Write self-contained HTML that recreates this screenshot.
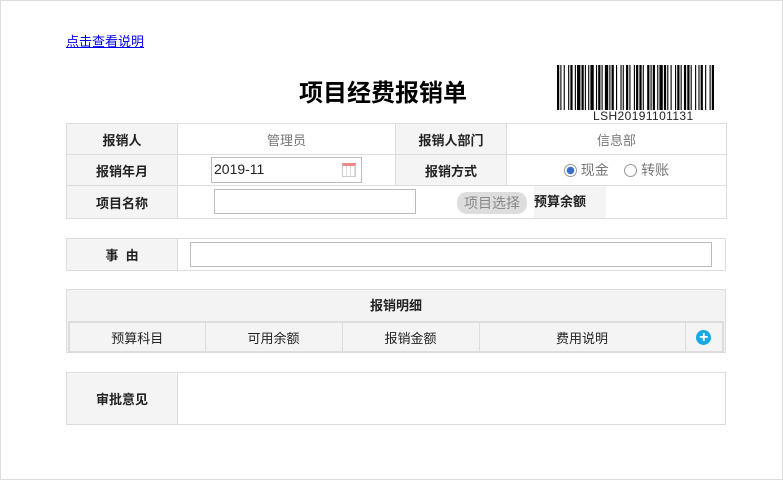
<!DOCTYPE html>
<html><head><meta charset="utf-8"><style>
*{box-sizing:border-box;margin:0;padding:0}
body{width:783px;height:480px;background:#fff;font-family:"Liberation Sans","Noto Sans CJK SC",sans-serif;font-size:13px;color:#222;position:relative;overflow:hidden}
.a{position:absolute}
a{color:#00e;text-decoration:underline;font-size:13px}
table{border-collapse:collapse;position:absolute;table-layout:fixed}
td{border:1px solid #ddd;text-align:center;vertical-align:middle}
.l{background:#f4f4f4;font-weight:bold}
.g{color:#777}
input{border:1px solid #bbb;height:24px;background:#fff}
</style></head><body>
<div class="a" style="left:0;top:0;width:783px;height:480px;border:1px solid #ddd"></div>
<a class="a" style="left:66px;top:31px" href="#">点击查看说明</a>
<div class="a" style="left:299px;top:73px;font-size:24px;font-weight:bold;color:#000">项目经费报销单</div>
<svg class="a" id="sv" style="left:557px;top:65px" width="157" height="45" preserveAspectRatio="none">
<g fill="#000" id="bc"></g>
</svg>
<div class="a" style="left:593px;top:109px;font-size:12px;color:#222;letter-spacing:0.4px">LSH20191101131</div>
<table style="left:66px;top:123px;width:660px">
<colgroup><col style="width:111px"><col style="width:218px"><col style="width:111px"><col style="width:220px"></colgroup>
<tr style="height:31px"><td class="l">报销人</td><td class="g">管理员</td><td class="l">报销人部门</td><td class="g">信息部</td></tr>
<tr style="height:31px"><td class="l">报销年月</td><td style="position:relative"><div class="a" style="left:33px;top:2px;width:151px;height:26px;border:1px solid #bbb;text-align:left;padding:3px 0 0 2px;font-size:14px">2019-11<span class="a" style="right:5px;top:5px;width:14px;height:14px;border:1px solid #ccc;border-top:3px solid #e88;background:repeating-linear-gradient(90deg,#fff 0 3px,#ddd 3px 4px)"></span></div></td><td class="l">报销方式</td><td class="g" style="font-size:14px"><span style="display:inline-block;width:13px;height:13px;border:1px solid #999;border-radius:50%;vertical-align:-2px;background:radial-gradient(#3a6fc9 0 3.5px,#fff 4px)"></span> 现金 &nbsp;&nbsp; <span style="display:inline-block;width:13px;height:13px;border:1px solid #999;border-radius:50%;vertical-align:-2px"></span> 转账</td></tr>
<tr style="height:33px"><td class="l">项目名称</td><td colspan="3" style="position:relative;text-align:left"><input class="a" style="left:36px;top:3px;width:202px;height:25px"><span class="a" style="left:279px;top:6px;background:#ddd;color:#888;border-radius:10px;padding:1px 7px;font-size:14px">项目选择</span><span class="a l" style="left:356px;top:0;width:72px;height:32px;line-height:32px;color:#222">预算余额</span></td></tr>
</table>
<table style="left:66px;top:238px;width:660px">
<colgroup><col style="width:111px"><col></colgroup>
<tr style="height:32px"><td class="l">事&nbsp;&nbsp;由</td><td style="position:relative"><input class="a" style="left:12px;top:3px;width:522px;height:25px"></td></tr>
</table>
<div class="a" style="left:66px;top:289px;width:660px;height:64px;border:1px solid #ddd;background:#f3f3f3">
<div style="height:31px;line-height:31px;text-align:center;font-weight:bold">报销明细</div>
<table style="left:1px;top:31px;width:656px;border:2px solid #ddd">
<colgroup><col style="width:136px"><col style="width:137px"><col style="width:137px"><col style="width:206px"><col></colgroup>
<tr style="height:30px;background:#f4f4f4"><td>预算科目</td><td>可用余额</td><td>报销金额</td><td>费用说明</td><td><span style="display:inline-block;width:15px;height:15px;border-radius:50%;background:#17a8e6;color:#fff;font-weight:bold;line-height:15px;font-size:16px">+</span></td></tr>
</table></div>
<table style="left:66px;top:372px;width:660px">
<colgroup><col style="width:111px"><col></colgroup>
<tr style="height:52px"><td class="l">审批意见</td><td></td></tr>
</table>
<script>
var g=document.getElementById('bc'),x=0,w=[2,1,1,2,1,3,1,1,2,2,1,1,3,1,2,1,1,2,1,1,3,2,1,1,2,1,1,2,3,1,1,1,2,2,1,3,1,1,1,2,2,1,1,3,1,1,2,1,2,1,1,3,2,1,1,1,2,2,1,1,3,1,2,1,1,2,1,3,1,1,2,1,1,2,2,1,2,1,1,3,1,2,1,1,2,2,1,3,1,1,2];
for(var i=0;i<w.length;i++){if(i%2==0){var r=document.createElementNS('http://www.w3.org/2000/svg','rect');r.setAttribute('x',x);r.setAttribute('y',0);r.setAttribute('width',w[i]);r.setAttribute('height',45);g.appendChild(r);}x+=w[i];}
document.getElementById('sv').setAttribute('viewBox','0 0 '+x+' 45');
</script>
</body></html>
